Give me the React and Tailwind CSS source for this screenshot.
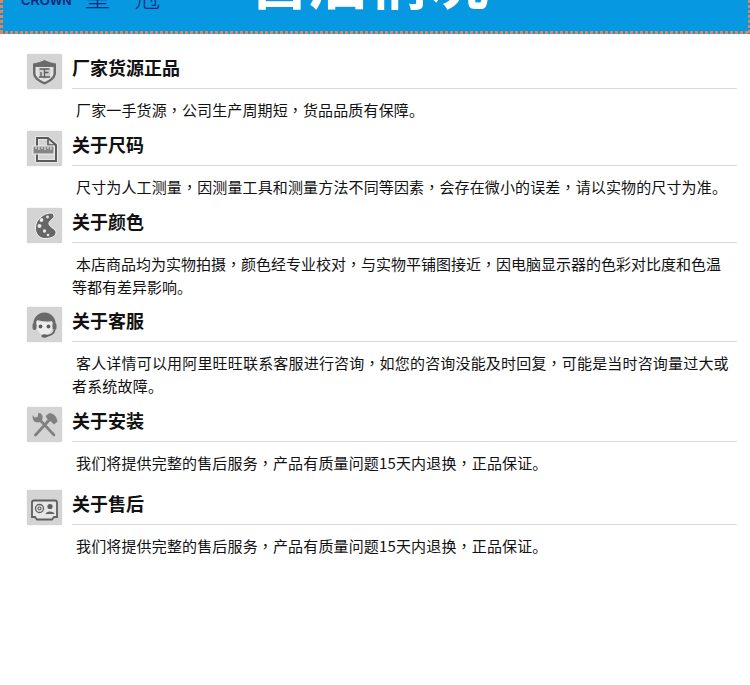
import React from 'react';

const FONT = "font-['Noto_Sans_CJK_SC','Liberation_Sans',sans-serif]";

function ShieldIcon() {
  return (
    <svg viewBox="0 0 35 35" className="w-[35px] h-[35px]">
      <path d="M6 9.5 C10 9 14 8 17.5 6 C21 8 25 9 29 9.5 L29 19 C29 24 24 28 17.5 30.5 C11 28 6 24 6 19 Z" fill="#6a6a6a" />
      <path d="M8.5 13 H26.5 V19 C26.5 23 22.5 26 17.5 28 C12.5 26 8.5 23 8.5 19 Z" fill="#e4e4e4" />
      <path d="M11.5 14.5 H23.5 V19.5 C23.5 22 21 24 17.5 25.5 C14 24 11.5 22 11.5 19.5 Z" fill="#8a8a8a" opacity="0.25" />
      <path d="M12.5 15 H22.5 M17.5 15 V23 M17.5 18.5 H21.5 M14 18 V23 M11.8 23 H23.2" stroke="#5c5c5c" strokeWidth="1.3" fill="none" />
    </svg>
  );
}

function RulerDocIcon() {
  return (
    <svg viewBox="0 0 35 35" className="w-[35px] h-[35px]">
      <path d="M10 7 H21 L29 14 V30 H10 Z" fill="none" stroke="#eeeeee" strokeWidth="3.6" />
      <path d="M10 7 H21 L29 14 V30 H10 Z" fill="none" stroke="#5a5a5a" strokeWidth="2" />
      <path d="M21 7 V14 H29" fill="none" stroke="#5a5a5a" strokeWidth="1.6" />
      <rect x="6" y="15" width="21" height="8" fill="#858585" stroke="#f0f0f0" strokeWidth="1" />
      <path d="M9 15.5 V18 M12 15.5 V19 M15 15.5 V18 M18 15.5 V19 M21 15.5 V18 M24 15.5 V19" stroke="#eeeeee" strokeWidth="1" />
    </svg>
  );
}

function PaletteIcon() {
  return (
    <svg viewBox="0 0 35 35" className="w-[35px] h-[35px]">
      <path d="M24 5 C17 5 9 11 8.5 19 C8 25.5 12 30.5 18 30.5 C24 30.5 29 28.5 29 24.5 C29 20.5 23 20 22 16 C21.3 12.5 26.5 11.5 27 8.5 C27.2 6.5 25.8 5 24 5 Z" fill="#666666" stroke="#f4f4f4" strokeWidth="1" />
      <circle cx="20.5" cy="9" r="1.4" fill="#e8e8e8" />
      <circle cx="14.5" cy="12" r="1.9" fill="#e8e8e8" />
      <circle cx="12.5" cy="18" r="2" fill="#e8e8e8" />
      <circle cx="17.5" cy="23" r="1.7" fill="#e8e8e8" />
      <circle cx="21" cy="27" r="1.3" fill="#e8e8e8" />
    </svg>
  );
}

function ServiceIcon() {
  return (
    <svg viewBox="0 0 35 35" className="w-[35px] h-[35px]">
      <path d="M6.5 20 C5 11 11 5.5 17.5 5.5 C24 5.5 30 11 28.5 20 L25.5 20 L25 14 C20 15 14 14 10 13 L9.5 20 Z" fill="#6a6a6a" />
      <path d="M9.5 14 C14 15 20 16 25.5 15 C26.5 22 23 28 17.5 28 C12 28 8.5 22 9.5 14 Z" fill="#ececec" />
      <rect x="5.5" y="16" width="4" height="7" rx="2" fill="#6a6a6a" />
      <rect x="25.5" y="16" width="4" height="7" rx="2" fill="#6a6a6a" />
      <circle cx="13.5" cy="19.5" r="1.9" fill="#5a5a5a" />
      <circle cx="21.5" cy="19.5" r="1.9" fill="#5a5a5a" />
      <path d="M27.5 23 C27 27 23 28.5 19 29" fill="none" stroke="#616161" strokeWidth="1.8" />
      <ellipse cx="17.5" cy="29" rx="3" ry="1.7" fill="#616161" />
    </svg>
  );
}

function ToolsIcon() {
  return (
    <svg viewBox="0 0 35 35" className="w-[35px] h-[35px]">
      <path d="M8.5 28 L24 11" stroke="#808080" strokeWidth="2.8" strokeLinecap="round" />
      <path d="M18.5 9 L22.5 6 C25.5 6.5 28 8 29.5 11 L30.5 14.5 L27 17.5 L24 14.5 L21 13 Z" fill="#808080" />
      <path d="M27 28 L13 13" stroke="#808080" strokeWidth="2.6" strokeLinecap="round" />
      <path d="M11.5 5.8 L10.5 10 L7.5 10.5 L5.8 8 C5 12 6.8 15.5 11 15.5 C14.5 15.5 16 12 15.5 9 C15 7 13.5 6 11.5 5.8 Z" fill="#808080" />
    </svg>
  );
}

function CardIcon() {
  return (
    <svg viewBox="0 0 35 35" className="w-[35px] h-[35px]">
      <path d="M7 10.5 H28 Q30 10.5 30 12.5 V27 L27 27 L25 29.5 H10 L8 27 L5 27 V12.5 Q5 10.5 7 10.5 Z" fill="#e6e6e6" stroke="#5f5f5f" strokeWidth="1.8" />
      <circle cx="12.5" cy="18.5" r="4" fill="none" stroke="#5f5f5f" strokeWidth="1.3" />
      <circle cx="12.5" cy="18.5" r="1.5" fill="none" stroke="#5f5f5f" strokeWidth="1.1" />
      <circle cx="23" cy="16.5" r="2.6" fill="#5f5f5f" />
      <path d="M18.5 24 C19 20.5 27 20.5 27.5 24 Z" fill="#5f5f5f" />
    </svg>
  );
}

const sections = [
  { icon: ShieldIcon, title: '厂家货源正品', body: '厂家一手货源，公司生产周期短，货品品质有保障。', pb: 'pb-[10px]', tracking: 'tracking-[0.13px]' },
  { icon: RulerDocIcon, title: '关于尺码', body: '尺寸为人工测量，因测量工具和测量方法不同等因素，会存在微小的误差，请以实物的尺寸为准。', pb: 'pb-[10px]', tracking: 'tracking-[0.14px]' },
  { icon: PaletteIcon, title: '关于颜色', body: '本店商品均为实物拍摄，颜色经专业校对，与实物平铺图接近，因电脑显示器的色彩对比度和色温等都有差异影响。', pb: 'pb-[9px]' },
  { icon: ServiceIcon, title: '关于客服', body: '客人详情可以用阿里旺旺联系客服进行咨询，如您的咨询没能及时回复，可能是当时咨询量过大或者系统故障。', pb: 'pb-[10px]', tracking: 'tracking-[0.18px]' },
  { icon: ToolsIcon, title: '关于安装', body: '我们将提供完整的售后服务，产品有质量问题15天内退换，正品保证。', pb: 'pb-[16px]', tracking: 'tracking-[0.15px]' },
  { icon: CardIcon, title: '关于售后', body: '我们将提供完整的售后服务，产品有质量问题15天内退换，正品保证。', pb: 'pb-[10px]', tracking: 'tracking-[0.15px]' },
];

// the centred comma of the reference is the TC form, the full stop stays SC
function Body({ text }) {
  const parts = text.split('，');
  return parts.map((part, i) => (
    <React.Fragment key={i}>
      {part}
      {i < parts.length - 1 && <span className="font-['Noto_Sans_CJK_TC',sans-serif]">，</span>}
    </React.Fragment>
  ));
}

function Section({ icon: Icon, title, body, pb, tracking }) {
  return (
    <section className={pb}>
      <div className="flex gap-[10px]">
        <div className="w-[35px] h-[35px] shrink-0 bg-[#d4d4d4] rounded-[2px] shadow-[0_0_1px_#aaaaaa]">
          <Icon />
        </div>
        <h2 className="flex-1 h-[35px] border-b border-[#d9d9d9] text-[18px] leading-[27px] font-bold text-[#111111]">{title}</h2>
      </div>
      <p className={`mt-[9px] ml-[45px] mr-[4px] text-[15px] leading-[23px] indent-[4px] text-[#111111] ${tracking || ''}`}>
        <Body text={body} />
      </p>
    </section>
  );
}

export default function App() {
  return (
    <div className={`w-[750px] h-[685px] bg-white overflow-hidden ${FONT}`}>
      {/* cropped banner */}
      <header className="relative h-[34px] bg-[#0798e2] overflow-hidden">
        <div className="absolute left-0 right-0 bottom-0 h-[3px] bg-[repeating-linear-gradient(90deg,#f0804f_0,#f0804f_3px,transparent_3px,transparent_5px)]" />
        <div className="absolute left-0 top-0 bottom-0 w-[3px] bg-[repeating-linear-gradient(180deg,#f0804f_0,#f0804f_3px,transparent_3px,transparent_5px)]" />
        <div className="absolute right-0 top-0 bottom-0 w-[2px] bg-[repeating-linear-gradient(180deg,#f0804f_0,#f0804f_3px,transparent_3px,transparent_5px)]" />
        <div className="absolute left-[21px] top-[-14px] flex items-baseline gap-[13px] text-[#0f2a78]">
          <span className="text-[13px] leading-[15px] font-bold font-['Liberation_Sans',sans-serif]">CROWN</span>
          <span className="relative top-[2px] text-[26px] leading-[16px] tracking-[24px] font-light">皇冠</span>
        </div>
        <h1 className="absolute left-[249px] top-[-52px] text-[60px] leading-[60px] font-bold text-white whitespace-nowrap">售后情况</h1>
      </header>

      <main className="pl-[27px] pr-[13px] pt-[20px]">
        {sections.map((s) => (
          <Section key={s.title} {...s} />
        ))}
      </main>
    </div>
  );
}
